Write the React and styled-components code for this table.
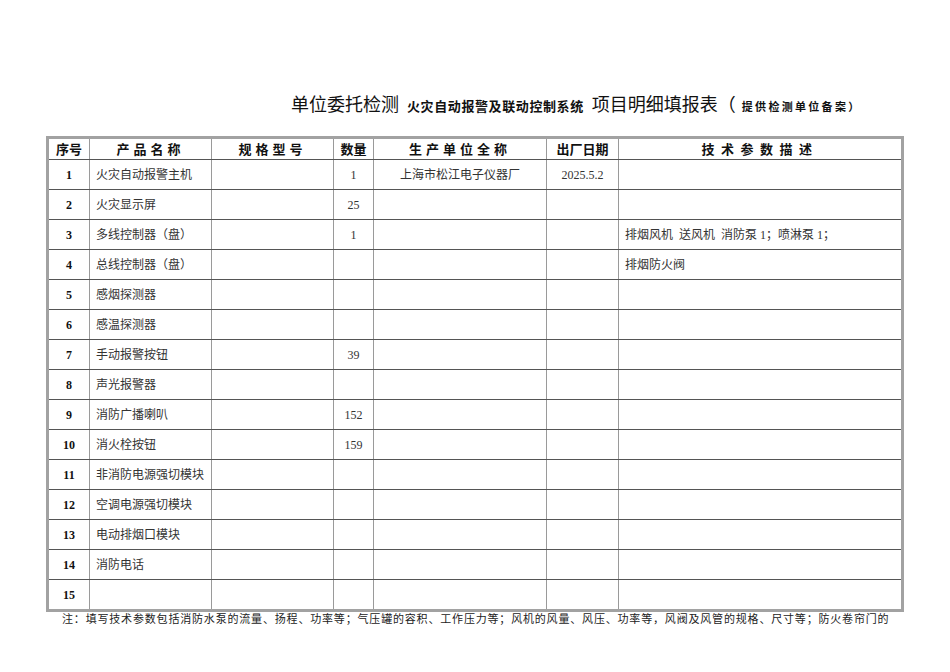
import React from "react";
import styled, { createGlobalStyle } from "styled-components";

const GlobalStyle = createGlobalStyle`
    body {
        margin: 0;
        background: #ffffff;
        font-family: "Liberation Serif", "Noto Sans CJK SC", serif;
        color: #222;
    }
`;

const Page = styled.div`
    width: 950px;
    min-height: 672px;
    padding: 92px 0 0 46px;
    box-sizing: border-box;
`;

// 标题行
const Title = styled.div`
    display: flex;
    align-items: baseline;
    padding-left: 245px;
    height: 22px;
    margin-bottom: 22px;
    font-family: "Noto Sans CJK SC", sans-serif;
    color: #111;
    white-space: nowrap;
`;

const BigText = styled.span`
    font-size: 18px;
    line-height: 22px;
    margin-right: ${(p) => p.$gap || 0}px;
`;

const BoldText = styled.span`
    font-size: ${(p) => p.$size || 13}px;
    font-weight: 700;
    letter-spacing: ${(p) => p.$spacing || 0}px;
    margin-right: ${(p) => p.$gap || 0}px;
`;

const Table = styled.table`
    width: 855px;
    table-layout: fixed;
    border-collapse: collapse;
    border: 3px solid #a2a2a2;
`;

const HeadCell = styled.th`
    height: 20px;
    padding: 0;
    font-family: "Noto Sans CJK SC", sans-serif;
    font-size: 13px;
    line-height: 16px;
    font-weight: 700;
    color: #111;
    text-align: center;
    letter-spacing: ${(p) => p.$spacing || 0}px;
    border-right: 1px solid #9a9a9a;
    border-bottom: 1px solid #555;
    white-space: nowrap;
`;

const Cell = styled.td`
    height: 29px;
    padding: 0 ${(p) => (p.$align === "left" ? "6px" : "0")};
    font-size: 12px;
    line-height: 16px;
    color: #333;
    text-align: ${(p) => p.$align || "center"};
    border-right: 1px solid #9a9a9a;
    border-bottom: 1px solid #555;
    white-space: pre;
    overflow: hidden;
`;

const NumCell = styled(Cell)`
    color: #111;
    font-weight: 700;
`;

const Note = styled.div`
    margin: 0 0 0 16px;
    font-size: 11px;
    line-height: 14px;
    letter-spacing: 0.82px;
    color: #222;
    white-space: nowrap;
`;

const columns = [
    { w: 42, label: "序号" },
    { w: 122, label: "产品名称", spacing: 4 },
    { w: 122, label: "规格型号", spacing: 4 },
    { w: 40, label: "数量" },
    { w: 173, label: "生产单位全称", spacing: 4 },
    { w: 72, label: "出厂日期" },
    { w: 284, label: "技术参数描述", spacing: 6.5 },
];

const rows = [
    ["火灾自动报警主机", "", "1", "上海市松江电子仪器厂", "2025.5.2", ""],
    ["火灾显示屏", "", "25", "", "", ""],
    ["多线控制器（盘）", "", "1", "", "", "排烟风机  送风机  消防泵 1；喷淋泵 1；"],
    ["总线控制器（盘）", "", "", "", "", "排烟防火阀"],
    ["感烟探测器", "", "", "", "", ""],
    ["感温探测器", "", "", "", "", ""],
    ["手动报警按钮", "", "39", "", "", ""],
    ["声光报警器", "", "", "", "", ""],
    ["消防广播喇叭", "", "152", "", "", ""],
    ["消火栓按钮", "", "159", "", "", ""],
    ["非消防电源强切模块", "", "", "", "", ""],
    ["空调电源强切模块", "", "", "", "", ""],
    ["电动排烟口模块", "", "", "", "", ""],
    ["消防电话", "", "", "", "", ""],
    ["", "", "", "", "", ""],
];

const App = () => {
    return (
        <Page>
            <GlobalStyle />
            <Title>
                <BigText $gap={8}>单位委托检测</BigText>
                <BoldText $gap={8} $spacing={0.6}>火灾自动报警及联动控制系统</BoldText>
                <BigText $gap={6}>项目明细填报表（</BigText>
                <BoldText $size={11} $spacing={2.3}>提供检测单位备案</BoldText>
                <BoldText $size={11}>）</BoldText>
            </Title>

            <Table>
                <colgroup>
                    {columns.map((c) => (
                        <col key={c.label} style={{ width: c.w }} />
                    ))}
                </colgroup>
                <thead>
                    <tr>
                        {columns.map((c) => (
                            <HeadCell key={c.label} $spacing={c.spacing}>
                                {c.label}
                            </HeadCell>
                        ))}
                    </tr>
                </thead>
                <tbody>
                    {rows.map((r, i) => (
                        <tr key={i}>
                            <NumCell>{i + 1}</NumCell>
                            <Cell $align="left">{r[0]}</Cell>
                            <Cell>{r[1]}</Cell>
                            <Cell>{r[2]}</Cell>
                            <Cell>{r[3]}</Cell>
                            <Cell>{r[4]}</Cell>
                            <Cell $align="left">{r[5]}</Cell>
                        </tr>
                    ))}
                </tbody>
            </Table>

            <Note>
                注：填写技术参数包括消防水泵的流量、扬程、功率等；气压罐的容积、工作压力等；风机的风量、风压、功率等，风阀及风管的规格、尺寸等；防火卷帘门的
            </Note>
        </Page>
    );
};

export default App;
